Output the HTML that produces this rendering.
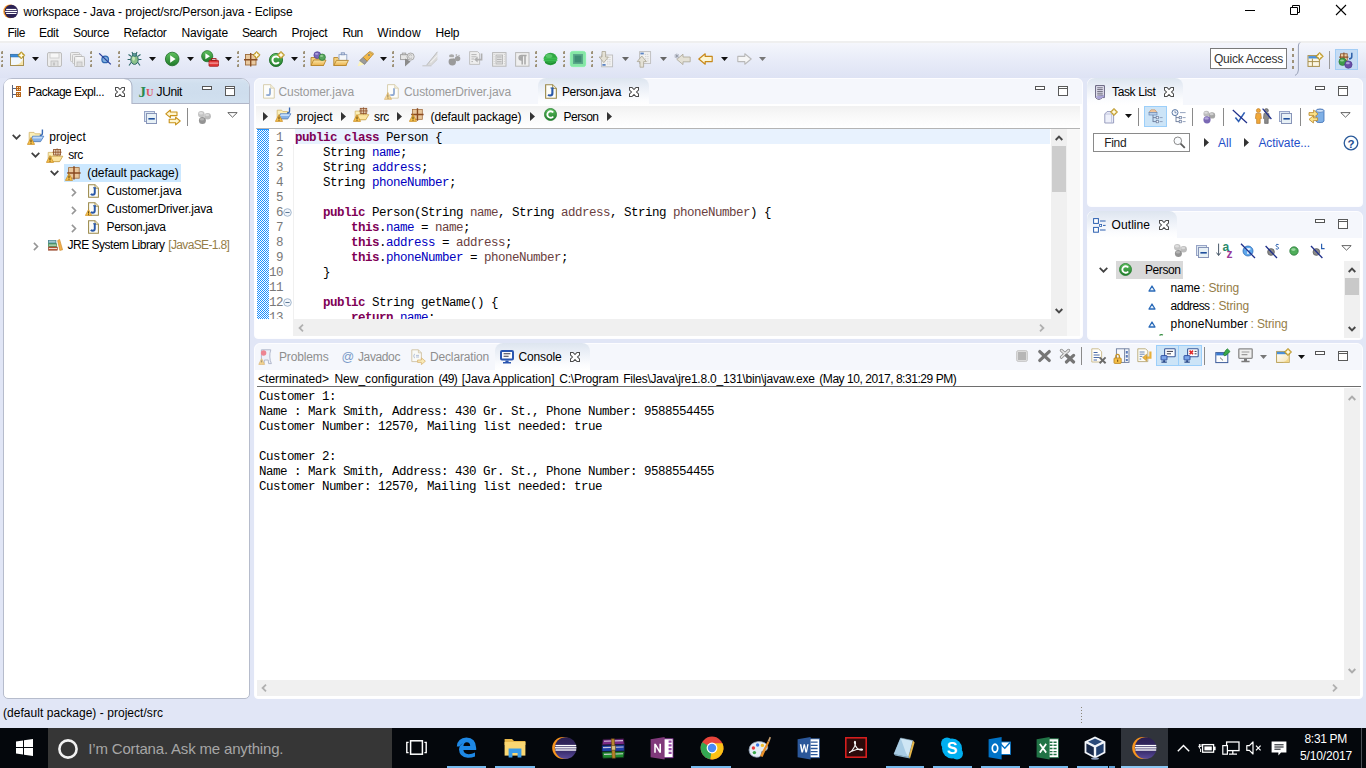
<!DOCTYPE html>
<html>
<head>
<meta charset="utf-8">
<title>workspace - Java - project/src/Person.java - Eclipse</title>
<style>
*{box-sizing:border-box;margin:0;padding:0}
html,body{width:1366px;height:768px;overflow:hidden;background:#e1e6f6;font-family:"Liberation Sans",sans-serif;font-size:12px;color:#000}
.a{position:absolute}
.t{position:absolute;white-space:pre;line-height:16px;height:16px}
svg{position:absolute;overflow:visible}
#titlebar{position:absolute;left:0;top:0;width:1366px;height:22px;background:#fff}
#menubar{position:absolute;left:0;top:22px;width:1366px;height:19px;background:#fff}
#toolbar{position:absolute;left:0;top:41px;width:1366px;height:37px;background:linear-gradient(#efefef 0px,#efefef 1.5px,#f5f6fc 2px,#eef1fa 10px,#e5e9f7 24px,#dee3f4 37px)}
.panel{position:absolute;background:#fff;overflow:hidden}
.panel.act{border:1px solid #b6bccc;border-radius:9px 9px 5px 5px}
.panel.ina{border:1px solid #fdfdff;border-radius:6px 6px 4px 4px}
.tabbar{position:absolute;left:0;top:0;right:0;height:25px}
.act .tabbar{background:linear-gradient(#d6e3f1 0,#d0dfee 20%,#cedded 60%,#d1e0ef 100%);border-bottom:1px solid #b6bccc}
.ina .tabbar{background:#f5f7fc}
#taskbar{position:absolute;left:0;top:728px;width:1366px;height:40px;background:#04070c}
</style>
</head>
<body>
<div id="titlebar">
<svg style="left:3px;top:3px" width="16" height="16" viewBox="0 0 16 16"><circle cx="7.1" cy="8.4" r="6.8" fill="#f7941e"/><circle cx="8.3" cy="8.4" r="6.7" fill="#2c2255"/><rect x="3.2" y="5.9" width="10.2" height="1.15" fill="#fff"/><rect x="2.2" y="7.9" width="12" height="1.15" fill="#fff"/><rect x="3.2" y="9.95" width="10.2" height="1.05" fill="#fff"/></svg>
<span class="t" style="left:23.5px;top:3.84px;font-size:12px;letter-spacing:-0.124px;">workspace - Java - project/src/Person.java - Eclipse</span>
<svg style="left:1245px;top:10px" width="10" height="1"><rect width="10" height="1" fill="#000"/></svg>
<svg style="left:1290px;top:5px" width="10" height="10" viewBox="0 0 10 10"><path d="M0.5 2.5h7v7h-7z M2.5 2.5v-2h7v7h-2" fill="none" stroke="#000" stroke-width="1"/></svg>
<svg style="left:1336px;top:5px" width="10" height="10" viewBox="0 0 10 10"><path d="M0 0L10 10M10 0L0 10" fill="none" stroke="#000" stroke-width="1.1"/></svg>
</div>
<div id="menubar"></div>
<span class="t" style="left:7.5px;top:24.84px;font-size:12px;letter-spacing:-0.461px;">File</span>
<span class="t" style="left:39px;top:24.84px;font-size:12px;letter-spacing:-0.297px;">Edit</span>
<span class="t" style="left:73px;top:24.84px;font-size:12px;letter-spacing:-0.339px;">Source</span>
<span class="t" style="left:123.5px;top:24.84px;font-size:12px;letter-spacing:-0.295px;">Refactor</span>
<span class="t" style="left:181.5px;top:24.84px;font-size:12px;letter-spacing:-0.109px;">Navigate</span>
<span class="t" style="left:242px;top:24.84px;font-size:12px;letter-spacing:-0.589px;">Search</span>
<span class="t" style="left:291.5px;top:24.84px;font-size:12px;letter-spacing:-0.194px;">Project</span>
<span class="t" style="left:342.5px;top:24.84px;font-size:12px;letter-spacing:-0.672px;">Run</span>
<span class="t" style="left:377.3px;top:24.84px;font-size:12px;letter-spacing:0.119px;">Window</span>
<span class="t" style="left:435.6px;top:24.84px;font-size:12px;letter-spacing:-0.247px;">Help</span>
<div id="toolbar"></div>
<svg width="0" height="0" style="left:0;top:0">
<defs>
<linearGradient id="gGreen" x1="0" y1="0" x2="0" y2="1"><stop offset="0" stop-color="#5fc15f"/><stop offset="1" stop-color="#1f7a2a"/></linearGradient>
<linearGradient id="gFold" x1="0" y1="0" x2="0" y2="1"><stop offset="0" stop-color="#fbe7a8"/><stop offset="1" stop-color="#eab14c"/></linearGradient>
<linearGradient id="gWin" x1="0" y1="0" x2="1" y2="1"><stop offset="0" stop-color="#ffffff"/><stop offset="1" stop-color="#f3e3b4"/></linearGradient>
<linearGradient id="gGray" x1="0" y1="0" x2="0" y2="1"><stop offset="0" stop-color="#f4f4f4"/><stop offset="1" stop-color="#d2d2d2"/></linearGradient>
<symbol id="hdl" viewBox="0 0 3 18"><rect x="0" y="0" width="2" height="3" fill="#9d927a"/><rect x="0" y="5" width="2" height="2" fill="#9d927a"/><rect x="0" y="9" width="2" height="2" fill="#9d927a"/><rect x="0" y="13" width="2" height="3" fill="#9d927a"/><rect x="0" y="0" width="1" height="1" fill="#c9c2b0"/><rect x="0" y="5" width="1" height="1" fill="#c9c2b0"/><rect x="0" y="9" width="1" height="1" fill="#c9c2b0"/><rect x="0" y="13" width="1" height="1" fill="#c9c2b0"/></symbol>
<symbol id="dd" viewBox="0 0 7 4"><path d="M0 0h7l-3.5 4z"/></symbol>
<symbol id="star" viewBox="0 0 8 8"><path d="M4 0.3L7.7 4L4 7.7L0.3 4z" fill="#c9a22c" stroke="#a88620" stroke-width="0.5" stroke-linejoin="round"/><path d="M4 1.3L4.9 3.1L6.7 4L4.9 4.9L4 6.7L3.1 4.9L1.3 4L3.1 3.1z" fill="#fffbe4"/></symbol>
</defs>
</svg>
<!-- handles -->
<svg style="left:1px;top:51px" width="3" height="18"><use href="#hdl"/></svg>
<svg style="left:90px;top:51px" width="3" height="18"><use href="#hdl"/></svg>
<svg style="left:118px;top:51px" width="3" height="18"><use href="#hdl"/></svg>
<svg style="left:237px;top:51px" width="3" height="18"><use href="#hdl"/></svg>
<svg style="left:303px;top:51px" width="3" height="18"><use href="#hdl"/></svg>
<svg style="left:392px;top:51px" width="3" height="18"><use href="#hdl"/></svg>
<svg style="left:535px;top:51px" width="3" height="18"><use href="#hdl"/></svg>
<svg style="left:563px;top:51px" width="3" height="18"><use href="#hdl"/></svg>
<svg style="left:591px;top:51px" width="3" height="18"><use href="#hdl"/></svg>
<!-- dropdown arrows -->
<svg style="left:32px;top:57px" width="7" height="4" fill="#111"><use href="#dd"/></svg>
<svg style="left:149px;top:57px" width="7" height="4" fill="#111"><use href="#dd"/></svg>
<svg style="left:187px;top:57px" width="7" height="4" fill="#111"><use href="#dd"/></svg>
<svg style="left:225px;top:57px" width="7" height="4" fill="#111"><use href="#dd"/></svg>
<svg style="left:291px;top:57px" width="7" height="4" fill="#111"><use href="#dd"/></svg>
<svg style="left:380px;top:57px" width="7" height="4" fill="#111"><use href="#dd"/></svg>
<svg style="left:622px;top:57px" width="7" height="4" fill="#666"><use href="#dd"/></svg>
<svg style="left:660px;top:57px" width="7" height="4" fill="#666"><use href="#dd"/></svg>
<svg style="left:721px;top:57px" width="7" height="4" fill="#111"><use href="#dd"/></svg>
<svg style="left:759px;top:57px" width="7" height="4" fill="#777"><use href="#dd"/></svg>
<!-- New -->
<svg style="left:10px;top:51px" width="16" height="16" viewBox="0 0 16 16"><rect x="0.5" y="3.5" width="13" height="11" fill="#f2f8fe" stroke="#a89050"/><rect x="0.5" y="3.2" width="13" height="2.8" fill="#3a8ad8" stroke="#2a6ab0" stroke-width="0.5"/><path d="M12.6 8Q11.6 13 5 14L13 14z" fill="#f6e4a8"/><use href="#star" x="7.3" y="0.3" width="8" height="8"/></svg>
<!-- Save (disabled) -->
<svg style="left:47px;top:52px" width="15" height="15" viewBox="0 0 15 15"><rect x="0.5" y="0.5" width="14" height="14" rx="1.5" fill="#ededed" stroke="#bdbdbd"/><rect x="3" y="1" width="9" height="5" fill="#f7f7f7" stroke="#c8c8c8" stroke-width="0.8"/><rect x="4" y="9" width="7" height="5.5" fill="#e0e0e0" stroke="#bdbdbd" stroke-width="0.8"/><rect x="6" y="10.5" width="2" height="3" fill="#c4c4c4"/></svg>
<!-- Save all (disabled) -->
<svg style="left:70px;top:52px" width="15" height="15" viewBox="0 0 15 15"><rect x="0.5" y="0.5" width="9" height="9" rx="1" fill="#ededed" stroke="#c4c4c4"/><rect x="2.5" y="2.5" width="9" height="9" rx="1" fill="#ededed" stroke="#c4c4c4"/><rect x="4.5" y="4.5" width="10" height="10" rx="1" fill="#ececec" stroke="#bdbdbd"/><rect x="7" y="10" width="5" height="4.5" fill="#dcdcdc" stroke="#bdbdbd" stroke-width="0.8"/><rect x="6.5" y="5" width="6" height="2.5" fill="#f7f7f7"/></svg>
<!-- Skip breakpoints -->
<svg style="left:98px;top:52px" width="14" height="14" viewBox="0 0 14 14"><circle cx="7.2" cy="7.4" r="3.3" fill="#7fb0e0" stroke="#2d66b0" stroke-width="1.2"/><path d="M1.2 1.4L12.8 12.4" stroke="#2a3f9a" stroke-width="1.3"/></svg>
<!-- Debug bug -->
<svg style="left:127px;top:51px" width="15" height="16" viewBox="0 0 15 16"><g stroke="#2f6a6a" stroke-width="1.1" fill="none"><path d="M4.5 5.5L1.5 3.5M10.5 5.5L13.5 3.5M3.8 8.5L0.6 8.5M11.2 8.5L14.4 8.5M4.5 11L2 14.5M10.5 11L13 14.5M6 3.5L5 1M9 3.5L10 1"/></g><ellipse cx="7.5" cy="8.6" rx="3.7" ry="4.8" fill="#8cc28a" stroke="#2f6a6a" stroke-width="1"/><ellipse cx="7.5" cy="3.9" rx="2.1" ry="1.5" fill="#5b9a98" stroke="#2f6a6a" stroke-width="0.8"/><ellipse cx="6.6" cy="7.6" rx="1.4" ry="2.2" fill="#c9e7b9"/></svg>
<!-- Run -->
<svg style="left:164px;top:51px" width="16" height="16" viewBox="0 0 16 16"><circle cx="8.2" cy="8" r="6.8" fill="url(#gGreen)" stroke="#1c6b25" stroke-width="0.8"/><path d="M6.2 4.2L11.6 8L6.2 11.8z" fill="#fff"/></svg>
<!-- Run last tool -->
<svg style="left:201px;top:50px" width="18" height="17" viewBox="0 0 18 17"><circle cx="6.2" cy="6.2" r="5.6" fill="url(#gGreen)" stroke="#1c6b25" stroke-width="0.7"/><path d="M4.4 3.2L9 6.2L4.4 9.2z" fill="#fff"/><rect x="8" y="10.3" width="9.5" height="6" rx="0.8" fill="#e33a3a" stroke="#a11717" stroke-width="0.8"/><rect x="10.6" y="8.6" width="4.4" height="2" fill="none" stroke="#a11717" stroke-width="0.9"/><rect x="8.2" y="12.6" width="9.2" height="1" fill="#f7b5b5"/></svg>
<!-- New package -->
<svg style="left:244px;top:51px" width="17" height="16" viewBox="0 0 17 16"><rect x="1.5" y="3.5" width="10.5" height="10.5" fill="#e8c9a0" stroke="#9b6a3b" stroke-width="0.9"/><path d="M6.7 2V15.5M0 8.7H13.5" stroke="#8a4f24" stroke-width="1.4"/><use href="#star" x="8.6" y="0" width="8" height="8"/></svg>
<!-- New class -->
<svg style="left:269px;top:51px" width="16" height="16" viewBox="0 0 16 16"><circle cx="7" cy="9" r="6.6" fill="url(#gGreen)" stroke="#1c6b25" stroke-width="0.8"/><path d="M9.9 6.8A3.6 3.6 0 1 0 9.9 11.2" fill="none" stroke="#fff" stroke-width="2"/><use href="#star" x="8" y="0" width="8" height="8"/></svg>
<!-- Open type -->
<svg style="left:310px;top:51px" width="17" height="16" viewBox="0 0 17 16"><path d="M1 6.5h4l1 1.3h7.5v6.7H1z" fill="#f3cf7c" stroke="#b8872e" stroke-width="0.9"/><path d="M1 14.5L3.6 9h12.4L13.5 14.5z" fill="url(#gFold)" stroke="#b8872e" stroke-width="0.9"/><circle cx="7.3" cy="4.1" r="3.4" fill="#7766b8" stroke="#4d3f95" stroke-width="0.7"/><circle cx="12.2" cy="6.2" r="3.2" fill="#56a55c" stroke="#2d7a38" stroke-width="0.7"/><ellipse cx="6.6" cy="2.8" rx="1.7" ry="0.9" fill="#b3a8e0"/><ellipse cx="11.6" cy="5" rx="1.6" ry="0.8" fill="#a7d9a5"/></svg>
<!-- Open task -->
<svg style="left:333px;top:51px" width="16" height="16" viewBox="0 0 16 16"><path d="M0.8 6.5h4l1 1.3h7.5v6.7H0.8z" fill="#f3cf7c" stroke="#b8872e" stroke-width="0.9"/><rect x="6" y="3.6" width="7.8" height="5.8" fill="#f4f7fb" stroke="#8fa3c4" stroke-width="0.9"/><rect x="8.2" y="1.8" width="3.3" height="2" fill="#cdd8ea" stroke="#7d92b8" stroke-width="0.8"/><path d="M0.8 14.5L3.4 9.4h12L12.8 14.5z" fill="url(#gFold)" stroke="#b8872e" stroke-width="0.9"/></svg>
<!-- Search flashlight -->
<svg style="left:357px;top:51px" width="17" height="16" viewBox="0 0 17 16"><path d="M0.6 15.2L3 9.8L7.5 13.2z" fill="#fff6b8"/><path d="M2.6 9.6L6.2 6.2L10.2 10.2L7.6 13.4z" fill="#9a9a9a" stroke="#6e6e6e" stroke-width="0.6"/><path d="M6.2 6.2L12.2 0.9L16.2 3.2L10.2 10.2z" fill="#f0b84a" stroke="#b8872e" stroke-width="0.8"/><path d="M12.2 0.9L13.6 0.6L16.4 2.2L16.2 3.2z" fill="#fbe6a0" stroke="#b8872e" stroke-width="0.6"/><rect x="11.3" y="3.4" width="1.3" height="1.3" fill="#2d5fb0"/></svg>
<!-- gray: open task-ish -->
<svg style="left:400px;top:52px" width="15" height="15" viewBox="0 0 15 15"><rect x="0.6" y="2.6" width="7" height="5" fill="#e6e6e6" stroke="#9c9c9c" stroke-width="0.9"/><rect x="2.2" y="1" width="3.6" height="1.8" fill="#d0d0d0" stroke="#9c9c9c" stroke-width="0.7"/><path d="M5 6.5L5 14.6L10.6 9.5z" fill="#8b8b8b"/><circle cx="10.6" cy="4.6" r="3.6" fill="#e2e2e2" stroke="#a6a6a6" stroke-width="0.9"/><path d="M12 3.6A1.9 1.9 0 1 0 12 5.8" fill="none" stroke="#b3b3b3" stroke-width="0.9"/></svg>
<!-- gray: pen -->
<svg style="left:422px;top:51px" width="16" height="16" viewBox="0 0 16 16"><path d="M15.4 0.8L15.4 8.4L9.4 14.2L4.6 14.2z" fill="#dadada"/><path d="M15.4 0.8L4.6 14.2" stroke="#bdbdbd" stroke-width="1"/><path d="M0.4 14.8H9.4" stroke="#c4c4c4" stroke-width="1"/><path d="M15.4 4.4L8.4 11.6" stroke="#f0f0f0" stroke-width="1.2"/><path d="M15.4 8.4L9.4 14.2" stroke="#c8c8c8" stroke-width="0.8"/></svg>
<!-- gray: balls -->
<svg style="left:448px;top:53px" width="13" height="13" viewBox="0 0 13 13"><circle cx="4.3" cy="8.8" r="3.7" fill="#9a9a9a"/><circle cx="9.6" cy="5.6" r="2.7" fill="#9f9f9f"/><ellipse cx="3.6" cy="3" rx="2.6" ry="1.8" fill="#a9a9a9"/><ellipse cx="3.4" cy="4.9" rx="2.4" ry="0.7" fill="#f2f2f2"/><circle cx="8.4" cy="2" r="0.9" fill="#b5b5b5"/><circle cx="11" cy="2.6" r="0.8" fill="#b5b5b5"/></svg>
<!-- gray: word wrap -->
<svg style="left:469px;top:51px" width="15" height="15" viewBox="0 0 15 15"><path d="M0.6 0.6H8.6L10.6 2.6V13.4H0.6z" fill="#efefef" stroke="#bcbcbc" stroke-width="0.9"/><path d="M2.4 3.6H7.6M2.4 5.8H7.6M2.4 8H5.2M2.4 10.6H4" stroke="#b5b5b5" stroke-width="1"/><path d="M12.6 2.4V8.6H7.2" fill="none" stroke="#b0b0b0" stroke-width="1.6"/><path d="M8.6 5.6L5.2 8.6L8.6 11.6z" fill="#b0b0b0"/></svg>
<!-- gray: block selection -->
<svg style="left:492px;top:52px" width="15" height="15" viewBox="0 0 15 15"><rect x="0.6" y="0.6" width="13.4" height="13.6" fill="#efefef" stroke="#b8b8b8" stroke-width="1"/><rect x="4" y="3" width="6.6" height="9" fill="#e3e3e3" stroke="#b0b0b0" stroke-width="0.8"/><path d="M5 5H9.6M5 7.4H9.6M5 9.8H9.6" stroke="#a9a9a9" stroke-width="0.9"/><path d="M2.2 2V13M12.4 2V13" stroke="#c9c9c9" stroke-width="0.9" stroke-dasharray="1 1.3"/></svg>
<!-- gray: pilcrow -->
<svg style="left:515px;top:52px" width="15" height="15" viewBox="0 0 15 15"><rect x="0.6" y="0.6" width="13.4" height="13.6" fill="#efefef" stroke="#b8b8b8" stroke-width="1"/><path d="M7.2 3.2V12.4M10 3.2V12.4M11.6 3.4H6.4A2.3 2.3 0 0 0 6.4 8H7.2" fill="none" stroke="#a8a8a8" stroke-width="1.5"/><path d="M4.6 4.2h2.6v3.2h-2z" fill="#a8a8a8"/></svg>
<!-- green ball -->
<svg style="left:543px;top:52px" width="15" height="14" viewBox="0 0 15 14"><ellipse cx="7.5" cy="7" rx="6.6" ry="6.2" fill="#2fa843"/><ellipse cx="6" cy="4" rx="3.4" ry="2" fill="#58c66a"/><path d="M0.4 6.2H14.6M0.4 8.2H14.6" stroke="#45c85a" stroke-width="0.9"/><path d="M2 10.5Q7.5 13.5 13 10.5" stroke="#1e8a30" stroke-width="1" fill="none"/></svg>
<!-- green square -->
<svg style="left:570px;top:51px" width="16" height="16" viewBox="0 0 16 16"><rect x="0.4" y="0.4" width="15.2" height="15.2" rx="2.2" fill="#86e6a6" stroke="#7ef0a2" stroke-width="0.8"/><rect x="3" y="3" width="10" height="10" fill="#5aa88a"/><rect x="4.6" y="4.6" width="6.8" height="6.8" fill="#3f8c74"/></svg>
<!-- next annotation -->
<svg style="left:598px;top:51px" width="16" height="17" viewBox="0 0 16 17"><rect x="3.6" y="4" width="11" height="11.8" fill="#f1f1f1" stroke="#bdbdbd" stroke-width="0.9"/><path d="M9 6.4H13M9 8.6H13M9 10.8H13M9 13H13" stroke="#c9c9c9" stroke-width="0.8" stroke-dasharray="1.4 0.8"/><rect x="4.4" y="13" width="3.2" height="1.8" fill="#5b84c4"/><path d="M4 0.5H7.6V6H10.4L5.8 11.6L1.2 6H4z" fill="#e4e1d6" stroke="#aaa594" stroke-width="0.8"/></svg>
<!-- prev annotation -->
<svg style="left:636px;top:51px" width="16" height="17" viewBox="0 0 16 17"><rect x="3.6" y="0.6" width="11" height="11.8" fill="#f1f1f1" stroke="#bdbdbd" stroke-width="0.9"/><path d="M8.6 3.4H13M9 5.6H13M9 7.8H13M9 10H13" stroke="#c9c9c9" stroke-width="0.8" stroke-dasharray="1.4 0.8"/><rect x="4.4" y="1.6" width="3.4" height="1.8" fill="#5b84c4"/><path d="M4 16.2H7.6V10.6H10.4L5.8 5L1.2 10.6H4z" fill="#e4e1d6" stroke="#aaa594" stroke-width="0.8"/></svg>
<!-- last edit location -->
<svg style="left:674px;top:53px" width="17" height="13" viewBox="0 0 17 13"><path d="M16.2 4H9V1.2L2.8 6.4L9 11.6V8.8H16.2z" fill="#e4e1d6" stroke="#aaa594" stroke-width="0.8"/><path d="M0.4 3H5.2M2.8 0.6V5.4M1 1.2L4.6 4.8M4.6 1.2L1 4.8" stroke="#8a8f9c" stroke-width="0.7"/></svg>
<!-- back -->
<svg style="left:698px;top:53px" width="15" height="12" viewBox="0 0 15 12"><path d="M14.2 3.4H7.2V0.8L0.8 6L7.2 11.2V8.6H14.2z" fill="#fdf6d2" stroke="#c8891a" stroke-width="1.2" stroke-linejoin="round"/></svg>
<!-- forward (disabled) -->
<svg style="left:737px;top:53px" width="15" height="12" viewBox="0 0 15 12"><path d="M0.8 3.4H7.8V0.8L14.2 6L7.8 11.2V8.6H0.8z" fill="#f6f6f6" stroke="#b9b9b9" stroke-width="1.1" stroke-linejoin="round"/></svg>
<!-- Quick access -->
<div class="a" style="left:1210px;top:48px;width:77px;height:21px;background:#fff;border:1px solid #7a7a7a"></div>
<span class="t" style="left:1214px;top:50.84px;font-size:12px;letter-spacing:-0.253px;color:#333;">Quick Access</span>
<svg style="left:1292px;top:48px" width="2" height="22" viewBox="0 0 2 22"><rect x="0" y="0" width="2" height="3" fill="#9d927a"/><rect x="0" y="6" width="2" height="3" fill="#9d927a"/><rect x="0" y="12" width="2" height="3" fill="#9d927a"/><rect x="0" y="18" width="2" height="3" fill="#9d927a"/></svg>
<svg style="left:1293px;top:42px" width="8" height="34" viewBox="0 0 8 34"><path d="M7 0.5Q5.4 1.5 5.4 4V28Q5.4 32 2 33.5" fill="none" stroke="#9aa2b8" stroke-width="1"/></svg>
<!-- open perspective -->
<svg style="left:1307px;top:52px" width="17" height="16" viewBox="0 0 17 16"><rect x="1" y="3.6" width="11.4" height="10.8" fill="#fbf6e4" stroke="#a8904e" stroke-width="1"/><rect x="1.5" y="4.1" width="10.4" height="2.4" fill="#4a90d9"/><path d="M1 9.6H12.4M5.4 6.6V14.4" stroke="#a8904e" stroke-width="1"/><use href="#star" x="8.4" y="0" width="8.4" height="8.4"/></svg>
<div class="a" style="left:1329px;top:51px;width:1px;height:18px;background:#9a9a9a"></div>
<div class="a" style="left:1335px;top:49px;width:23px;height:21px;background:#c5dcf4;border:1px solid #a3cdf5"></div>
<svg style="left:1338px;top:52px" width="17" height="17" viewBox="0 0 17 17"><rect x="2.6" y="1.8" width="6.6" height="6.6" fill="#eccfa6" stroke="#8a4f24" stroke-width="0.8"/><path d="M5.9 0.6V9.4M1.2 5.1H10.4" stroke="#8a4f24" stroke-width="1.1"/><path d="M13.8 0.8V4.4Q13.8 6.8 11 6.8" fill="none" stroke="#2d5fa8" stroke-width="1.5"/><circle cx="4.6" cy="9.8" r="3.7" fill="#3f9a4a" stroke="#27752f" stroke-width="0.6"/><ellipse cx="4" cy="8.5" rx="2" ry="1.1" fill="#8fd093"/><circle cx="10.4" cy="12.6" r="3.7" fill="#6a4fa6" stroke="#4a3388" stroke-width="0.6"/><ellipse cx="9.8" cy="11.2" rx="2" ry="1.1" fill="#b1a0d8"/></svg>
<svg width="0" height="0" style="left:0;top:0"><defs>
<symbol id="warn" viewBox="0 0 8 8"><path d="M4 0.5L7.6 7.4H0.4z" fill="#f6c04a" stroke="#c98a1c" stroke-width="0.7" stroke-linejoin="round"/><rect x="3.55" y="2.6" width="0.9" height="2.6" fill="#3a2a08"/><rect x="3.55" y="5.8" width="0.9" height="0.9" fill="#3a2a08"/></symbol>
<symbol id="jfile" viewBox="0 0 13 16"><path d="M0.7 0.7H8.2L12.3 4.8V15.3H0.7z" fill="#fdfdf8" stroke="#9a8848" stroke-width="1.2"/><path d="M8.2 0.7V4.8H12.3" fill="#efe6c8" stroke="#9a8848" stroke-width="0.9"/><path d="M8 4.2V10Q8 12.4 5.6 12.4Q4.2 12.4 3.4 11.4" fill="none" stroke="#2a58a8" stroke-width="2.3"/><path d="M6 4.2H9.4" stroke="#2a58a8" stroke-width="1.2"/></symbol>
<symbol id="jfileg" viewBox="0 0 13 16"><path d="M0.6 0.6H8.4L12.2 4.4V15.2H0.6z" fill="#fdfdfa" stroke="#d6cba8" stroke-width="1"/><path d="M8.4 0.6V4.4H12.2" fill="#f4efdd" stroke="#d6cba8" stroke-width="0.8"/><path d="M7.6 4.4V9.8Q7.6 12 5.4 12Q4.2 12 3.6 11.2" fill="none" stroke="#8fa9d2" stroke-width="1.9"/></symbol>
<symbol id="pkgi" viewBox="0 0 15 14"><rect x="2.6" y="1.6" width="10.6" height="10.6" fill="#e9c79c" stroke="#a06a3a" stroke-width="0.8"/><path d="M8 0.2V13.6M1.2 7H14.6" stroke="#8a4a20" stroke-width="1.5"/></symbol>
<symbol id="proj" viewBox="0 0 17 16"><path d="M1.2 3.4H6L7.2 4.8H12.4V12.6H1.2z" fill="#fbefb8" stroke="#d2b468" stroke-width="0.8"/><path d="M2 12.6L4.6 7.2H15.8L12.6 12.6z" fill="#86b2e8" stroke="#4a7cc4" stroke-width="0.8"/><path d="M5.2 7.8H14.8L13.8 9.6H4.4z" fill="#c4dcf8"/><path d="M14.4 0.6V4.2Q14.4 6.4 11.8 6.4" fill="none" stroke="#3a6ab4" stroke-width="1.4"/></symbol>
<symbol id="srcf" viewBox="0 0 17 15"><path d="M1.2 4.4H6L7.2 5.8H12.4V13.6H1.2z" fill="#fbefb8" stroke="#d2b468" stroke-width="0.8"/><path d="M2 13.6L4.6 8.2H15.8L12.6 13.6z" fill="#fbe4a0" stroke="#c8a048" stroke-width="0.8"/><rect x="6.6" y="1.4" width="7" height="5.6" fill="#fbf0dc" stroke="#8a4a20" stroke-width="0.8"/><path d="M10.1 0.4V7.8M5.6 4.2H14.6M8.3 1.4V7M11.9 1.4V7" stroke="#8a4a20" stroke-width="0.8"/></symbol>
<symbol id="chv" viewBox="0 0 9 6"><path d="M0.7 0.9L4.5 4.7L8.3 0.9" fill="none" stroke="#404040" stroke-width="1.7"/></symbol>
<symbol id="chr" viewBox="0 0 6 9"><path d="M0.9 0.9L4.5 4.5L0.9 8.1" fill="none" stroke="#969696" stroke-width="1.6"/></symbol>
<symbol id="xclose" viewBox="0 0 10 10"><path d="M0.5 0.5H3L5 2.5L7 0.5H9.5V3L7.5 5L9.5 7V9.5H7L5 7.5L3 9.5H0.5V7L2.5 5L0.5 3z" fill="#fff" stroke="#4c4c4c" stroke-width="1.05" stroke-linejoin="miter"/></symbol>
<symbol id="minb" viewBox="0 0 10 4"><rect x="0.5" y="0.5" width="9" height="3" fill="#fff" stroke="#555" stroke-width="1"/></symbol>
<symbol id="maxb" viewBox="0 0 10 10"><rect x="0.5" y="0.5" width="9" height="9" fill="#fff" stroke="#5a5a5a" stroke-width="1"/><path d="M0.5 2.5H9.5" stroke="#5a5a5a" stroke-width="1"/></symbol>
<symbol id="vmenu" viewBox="0 0 11 6"><path d="M0.8 0.6H10.2L5.5 5.2z" fill="#fff" stroke="#555" stroke-width="0.9" stroke-linejoin="round"/></symbol>
<symbol id="gballs" viewBox="0 0 14 14"><circle cx="4.3" cy="4.3" r="3.3" fill="#c4c4c4"/><circle cx="10.6" cy="6.2" r="3.3" fill="#bcbcbc"/><circle cx="5.4" cy="10.4" r="3.5" fill="#939393"/><ellipse cx="4" cy="3.2" rx="2" ry="1.2" fill="#dedede"/><ellipse cx="10.2" cy="5" rx="2" ry="1.2" fill="#d8d8d8"/><ellipse cx="5" cy="9.2" rx="2.2" ry="1.2" fill="#b4b4b4"/></symbol>
<symbol id="collapse" viewBox="0 0 14 14"><rect x="0.5" y="1.5" width="10" height="10" fill="#dde8f2" stroke="#97a4c6" stroke-width="1"/><rect x="2.5" y="3.5" width="10" height="10" fill="#e8f1f6" stroke="#8794b8" stroke-width="1"/><rect x="4.4" y="8" width="6.4" height="1.6" fill="#1f4f9c"/></symbol>
</defs></svg>
<div id="pkg" class="panel act" style="left:3px;top:78px;width:247px;height:621px">
<div class="tabbar"></div>
</div>
<svg style="left:3px;top:78px" width="247" height="28" viewBox="0 0 247 28"><path d="M1 27V9Q1 1 9 1H121Q128 1.2 128.5 8V27z" fill="#fff"/><path d="M121 0.5Q128.6 0.8 129 8V25.5H246" fill="none" stroke="#b0b6c8" stroke-width="1"/></svg>
<!-- Package explorer tab icon -->
<svg style="left:11px;top:85px" width="11" height="13" viewBox="0 0 11 13" shape-rendering="crispEdges"><rect x="1" y="0" width="1" height="13" fill="#5a6680"/><rect x="2" y="3" width="3" height="1" fill="#5a6680"/><rect x="2" y="9" width="3" height="1" fill="#5a6680"/><rect x="5" y="1" width="5" height="5" fill="#b8651a"/><rect x="5" y="7" width="5" height="5" fill="#b8651a"/><rect x="6" y="2" width="1" height="1" fill="#f7dcae"/><rect x="8" y="2" width="1" height="1" fill="#f7dcae"/><rect x="6" y="4" width="1" height="1" fill="#f7dcae"/><rect x="8" y="4" width="1" height="1" fill="#f7dcae"/><rect x="6" y="8" width="1" height="1" fill="#f7dcae"/><rect x="8" y="8" width="1" height="1" fill="#f7dcae"/><rect x="6" y="10" width="1" height="1" fill="#f7dcae"/><rect x="8" y="10" width="1" height="1" fill="#f7dcae"/></svg>
<span class="t" style="left:28px;top:83.84px;font-size:12px;letter-spacing:-0.493px;">Package Expl...</span>
<svg style="left:115px;top:87px" width="10" height="10"><use href="#xclose"/></svg>
<span class="t" style="left:138.6px;top:83.94px;font-size:15px;color:#2a8a50;font-family:'Liberation Serif',serif;font-weight:bold;">J</span><span class="t" style="left:146px;top:85.46px;font-size:10.5px;color:#e05060;font-family:'Liberation Serif',serif;font-weight:bold;">U</span>
<span class="t" style="left:156.5px;top:83.84px;font-size:12px;letter-spacing:-0.369px;">JUnit</span>
<svg style="left:202px;top:86px" width="10" height="4"><use href="#minb"/></svg>
<svg style="left:225px;top:86px" width="10" height="10"><use href="#maxb"/></svg>
<!-- view toolbar -->
<svg style="left:144px;top:110px" width="14" height="14"><use href="#collapse"/></svg>
<svg style="left:165px;top:109px" width="16" height="17" viewBox="0 0 16 17"><path d="M12 3H5.4V1L0.8 4.8L5.4 8.6V6.6H12z" fill="#fff6d0" stroke="#c8921a" stroke-width="1.1" stroke-linejoin="round"/><path d="M4.2 10.2H10.6V8.2L15.2 12L10.6 15.8V13.8H4.2z" fill="#fff6d0" stroke="#c8921a" stroke-width="1.1" stroke-linejoin="round"/></svg>
<div class="a" style="left:187px;top:108px;width:1px;height:18px;background:#8a8a8a"></div>
<svg style="left:197px;top:110px" width="14" height="14"><use href="#gballs"/></svg>
<svg style="left:227px;top:112px" width="11" height="6"><use href="#vmenu"/></svg>
<!-- tree -->
<svg style="left:12px;top:134px" width="9" height="6"><use href="#chv"/></svg>
<svg style="left:28px;top:129px" width="17" height="16"><use href="#proj"/></svg><svg style="left:27px;top:137px" width="8" height="8"><use href="#warn"/></svg>
<span class="t" style="left:49.3px;top:128.84px;font-size:12px;letter-spacing:0.067px;">project</span>
<svg style="left:31px;top:152px" width="9" height="6"><use href="#chv"/></svg>
<svg style="left:47px;top:148px" width="17" height="15"><use href="#srcf"/></svg><svg style="left:46px;top:155px" width="8" height="8"><use href="#warn"/></svg>
<span class="t" style="left:68.3px;top:146.84px;font-size:12px;letter-spacing:-0.500px;">src</span>
<div class="a" style="left:64px;top:164px;width:117px;height:18px;background:#cce8ff"></div>
<svg style="left:50px;top:170px" width="9" height="6"><use href="#chv"/></svg>
<svg style="left:66px;top:166px" width="15" height="14"><use href="#pkgi"/></svg><svg style="left:65px;top:173px" width="8" height="8"><use href="#warn"/></svg>
<span class="t" style="left:87.3px;top:164.84px;font-size:12px;letter-spacing:-0.084px;">(default package)</span>
<svg style="left:71px;top:188px" width="6" height="9"><use href="#chr"/></svg>
<svg style="left:88px;top:184px" width="11" height="14"><use href="#jfile"/></svg>
<span class="t" style="left:106.6px;top:182.84px;font-size:12px;letter-spacing:-0.131px;">Customer.java</span>
<svg style="left:71px;top:206px" width="6" height="9"><use href="#chr"/></svg>
<svg style="left:88px;top:202px" width="11" height="14"><use href="#jfile"/></svg><svg style="left:85px;top:209px" width="7" height="7"><use href="#warn"/></svg>
<span class="t" style="left:106.6px;top:200.84px;font-size:12px;letter-spacing:-0.142px;">CustomerDriver.java</span>
<svg style="left:71px;top:224px" width="6" height="9"><use href="#chr"/></svg>
<svg style="left:88px;top:220px" width="11" height="14"><use href="#jfile"/></svg>
<span class="t" style="left:106.6px;top:218.84px;font-size:12px;letter-spacing:-0.398px;">Person.java</span>
<svg style="left:33px;top:241.5px" width="6" height="9"><use href="#chr"/></svg>
<svg style="left:48px;top:239px" width="15" height="12" viewBox="0 0 15 12"><rect x="0.4" y="1.6" width="7.6" height="2.8" fill="#3a8a9a" stroke="#2a6a78" stroke-width="0.5"/><rect x="1" y="2.4" width="6.6" height="1" fill="#e4f0f0"/><rect x="0.4" y="4.8" width="8.4" height="2.8" fill="#4a9a5a" stroke="#2f7a3f" stroke-width="0.5"/><rect x="1" y="5.6" width="7.4" height="1" fill="#e4f0e4"/><rect x="0.4" y="8" width="9" height="3.2" fill="#b85a3a" stroke="#8a3a20" stroke-width="0.5"/><rect x="1" y="9" width="8" height="1" fill="#f0dcd0"/><path d="M9.6 1.6L11.6 0.4L14.6 10.8L11.8 11.4z" fill="#f4b04a" stroke="#c8862a" stroke-width="0.6"/></svg>
<span class="t" style="left:67.6px;top:236.84px;font-size:12px;letter-spacing:-0.502px;">JRE System Library</span>
<span class="t" style="left:168.2px;top:236.84px;font-size:12px;letter-spacing:-0.642px;color:#957d47;">&#91;JavaSE-1.8&#93;</span>
<svg width="0" height="0" style="left:0;top:0"><defs>
<symbol id="bca" viewBox="0 0 5 9"><path d="M0 0L5 4.5L0 9z" fill="#333"/></symbol>
<symbol id="clsC" viewBox="0 0 14 14"><circle cx="7" cy="7" r="6.5" fill="url(#gGreen)" stroke="#1f7a2a" stroke-width="0.8"/><path d="M9.9 4.9A3.5 3.5 0 1 0 9.9 9.1" fill="none" stroke="#fff" stroke-width="2"/></symbol>
<symbol id="sbup" viewBox="0 0 8 6"><path d="M0.7 5L4 1.6L7.3 5" fill="none" stroke="#484848" stroke-width="1.9"/></symbol>
<symbol id="sbdn" viewBox="0 0 8 6"><path d="M0.7 1L4 4.4L7.3 1" fill="none" stroke="#484848" stroke-width="1.9"/></symbol>
<symbol id="sblt" viewBox="0 0 6 8"><path d="M5 0.7L1.6 4L5 7.3" fill="none" stroke="#b0b0b0" stroke-width="1.8"/></symbol>
<symbol id="sbrt" viewBox="0 0 6 8"><path d="M1 0.7L4.4 4L1 7.3" fill="none" stroke="#b0b0b0" stroke-width="1.8"/></symbol>
<symbol id="fold" viewBox="0 0 9 9"><circle cx="4.5" cy="4.5" r="3.8" fill="#f2f6fb" stroke="#9ab0c8" stroke-width="0.9"/><path d="M2.4 4.5H6.6" stroke="#5a7896" stroke-width="1"/></symbol>
</defs></svg>
<div id="editor" class="panel ina" style="left:254px;top:78px;width:829px;height:261px">
<div class="tabbar" style="height:25px"></div>
<div class="a" style="left:1px;top:27px;width:824px;height:23px;background:linear-gradient(#f1f1f1 0,#f8f8f8 40%,#fff 100%);border-bottom:1px solid #b4b4b4"></div>
<!-- code area -->
<div class="a" style="left:2px;top:50px;width:12px;height:190px;background-color:#fff;background-image:conic-gradient(#1e90ff 25%,#fff 0 50%,#1e90ff 0 75%,#fff 0);background-size:2px 2px;border-top:1px solid #1e90ff"></div>
<div class="a" style="left:40px;top:50px;width:755px;height:15px;background:#e8f2fe"></div>
<div class="a" style="left:38px;top:65px;width:1px;height:175px;background:#f0f0f0"></div>
<!-- vscroll -->
<div class="a" style="left:796px;top:50px;width:16px;height:207px;background:#f0f0f0"></div>
<div class="a" style="left:797px;top:67px;width:14px;height:46px;background:#cdcdcd"></div>
<div class="a" style="left:812px;top:50px;width:13px;height:207px;background:#f8f8f8"></div>
<!-- hscroll -->
<div class="a" style="left:38px;top:240px;width:774px;height:17px;background:#f0f0f0"></div>
</div>
<div class="a" style="left:538px;top:78px;width:111px;height:27px;background:linear-gradient(#dde5ef 0,#e9eef6 30%,#fbfcfe 80%,#fff 100%);border-radius:8px 8px 0 0"></div>
<svg style="left:1055px;top:135px" width="8" height="6"><use href="#sbup"/></svg>
<svg style="left:1055px;top:308px" width="8" height="6"><use href="#sbdn"/></svg>
<svg style="left:298px;top:324px" width="6" height="8"><use href="#sblt"/></svg>
<svg style="left:1039px;top:324px" width="6" height="8"><use href="#sbrt"/></svg>
<!-- editor tabs -->
<svg style="left:263px;top:84px" width="12" height="15"><use href="#jfileg"/></svg>
<span class="t" style="left:278.5px;top:83.84px;font-size:12px;letter-spacing:-0.093px;color:#9a9a9a;">Customer.java</span>
<svg style="left:387px;top:84px" width="12" height="15"><use href="#jfileg"/></svg><svg style="left:384px;top:92px" width="8" height="8" opacity="0.55"><use href="#warn"/></svg>
<span class="t" style="left:404px;top:83.84px;font-size:12px;letter-spacing:-0.090px;color:#9a9a9a;">CustomerDriver.java</span>
<svg style="left:545px;top:84px" width="12" height="15"><use href="#jfile"/></svg>
<span class="t" style="left:562px;top:83.84px;font-size:12px;letter-spacing:-0.398px;">Person.java</span>
<svg style="left:629px;top:87px" width="10" height="10"><use href="#xclose"/></svg>
<svg style="left:1035px;top:86px" width="10" height="4"><use href="#minb"/></svg>
<svg style="left:1058px;top:86px" width="10" height="10"><use href="#maxb"/></svg>
<!-- breadcrumb -->
<svg style="left:263px;top:112px" width="5" height="9"><use href="#bca"/></svg>
<svg style="left:276px;top:107px" width="16" height="15"><use href="#proj"/></svg><svg style="left:275px;top:114px" width="8" height="8"><use href="#warn"/></svg>
<span class="t" style="left:296.5px;top:108.84px;font-size:12px;letter-spacing:-0.004px;">project</span>
<svg style="left:341px;top:112px" width="5" height="9"><use href="#bca"/></svg>
<svg style="left:354px;top:107px" width="16" height="14"><use href="#srcf"/></svg><svg style="left:353px;top:114px" width="8" height="8"><use href="#warn"/></svg>
<span class="t" style="left:374px;top:108.84px;font-size:12px;letter-spacing:-0.333px;">src</span>
<svg style="left:397px;top:112px" width="5" height="9"><use href="#bca"/></svg>
<svg style="left:410px;top:108px" width="14" height="13"><use href="#pkgi"/></svg><svg style="left:409px;top:114px" width="8" height="8"><use href="#warn"/></svg>
<span class="t" style="left:430.5px;top:108.84px;font-size:12px;letter-spacing:-0.102px;">(default package)</span>
<svg style="left:530px;top:112px" width="5" height="9"><use href="#bca"/></svg>
<svg style="left:544px;top:108px" width="13" height="13"><use href="#clsC"/></svg>
<span class="t" style="left:563.5px;top:108.84px;font-size:12px;letter-spacing:-0.505px;">Person</span>
<svg style="left:607px;top:112px" width="5" height="9"><use href="#bca"/></svg>
<!-- line numbers -->
<span class="t" style="left:276px;top:129.67px;font-size:12.5px;letter-spacing:-0.516px;color:#787878;font-family:'Liberation Mono',monospace;">1</span>
<span class="t" style="left:276px;top:144.67px;font-size:12.5px;letter-spacing:-0.516px;color:#787878;font-family:'Liberation Mono',monospace;">2</span>
<span class="t" style="left:276px;top:159.67px;font-size:12.5px;letter-spacing:-0.516px;color:#787878;font-family:'Liberation Mono',monospace;">3</span>
<span class="t" style="left:276px;top:174.67px;font-size:12.5px;letter-spacing:-0.516px;color:#787878;font-family:'Liberation Mono',monospace;">4</span>
<span class="t" style="left:276px;top:189.67px;font-size:12.5px;letter-spacing:-0.516px;color:#787878;font-family:'Liberation Mono',monospace;">5</span>
<span class="t" style="left:276px;top:204.67px;font-size:12.5px;letter-spacing:-0.516px;color:#787878;font-family:'Liberation Mono',monospace;">6</span>
<span class="t" style="left:276px;top:219.67px;font-size:12.5px;letter-spacing:-0.516px;color:#787878;font-family:'Liberation Mono',monospace;">7</span>
<span class="t" style="left:276px;top:234.67px;font-size:12.5px;letter-spacing:-0.516px;color:#787878;font-family:'Liberation Mono',monospace;">8</span>
<span class="t" style="left:276px;top:249.67px;font-size:12.5px;letter-spacing:-0.516px;color:#787878;font-family:'Liberation Mono',monospace;">9</span>
<span class="t" style="left:269px;top:264.67px;font-size:12.5px;letter-spacing:-0.508px;color:#787878;font-family:'Liberation Mono',monospace;">10</span>
<span class="t" style="left:269px;top:279.67px;font-size:12.5px;letter-spacing:-0.508px;color:#787878;font-family:'Liberation Mono',monospace;">11</span>
<span class="t" style="left:269px;top:294.67px;font-size:12.5px;letter-spacing:-0.508px;color:#787878;font-family:'Liberation Mono',monospace;">12</span>
<svg style="left:283px;top:207.5px" width="9" height="9"><use href="#fold"/></svg>
<svg style="left:283px;top:297.5px" width="9" height="9"><use href="#fold"/></svg>
<!-- code -->
<span class="t" style="left:295px;top:129.67px;font-size:12.5px;letter-spacing:-0.503px;font-family:'Liberation Mono',monospace;"><b style="color:#7f0055">public</b> <b style="color:#7f0055">class</b> Person {</span>
<span class="t" style="left:295px;top:144.67px;font-size:12.5px;letter-spacing:-0.503px;font-family:'Liberation Mono',monospace;">    String <span style="color:#0000c0">name</span>;</span>
<span class="t" style="left:295px;top:159.67px;font-size:12.5px;letter-spacing:-0.502px;font-family:'Liberation Mono',monospace;">    String <span style="color:#0000c0">address</span>;</span>
<span class="t" style="left:295px;top:174.67px;font-size:12.5px;letter-spacing:-0.502px;font-family:'Liberation Mono',monospace;">    String <span style="color:#0000c0">phoneNumber</span>;</span>
<span class="t" style="left:295px;top:204.67px;font-size:12.5px;letter-spacing:-0.502px;font-family:'Liberation Mono',monospace;">    <b style="color:#7f0055">public</b> Person(String <span style="color:#6a3e3e">name</span>, String <span style="color:#6a3e3e">address</span>, String <span style="color:#6a3e3e">phoneNumber</span>) {</span>
<span class="t" style="left:295px;top:219.67px;font-size:12.5px;letter-spacing:-0.504px;font-family:'Liberation Mono',monospace;">        <b style="color:#7f0055">this</b>.<span style="color:#0000c0">name</span> = <span style="color:#6a3e3e">name</span>;</span>
<span class="t" style="left:295px;top:234.67px;font-size:12.5px;letter-spacing:-0.504px;font-family:'Liberation Mono',monospace;">        <b style="color:#7f0055">this</b>.<span style="color:#0000c0">address</span> = <span style="color:#6a3e3e">address</span>;</span>
<span class="t" style="left:295px;top:249.67px;font-size:12.5px;letter-spacing:-0.503px;font-family:'Liberation Mono',monospace;">        <b style="color:#7f0055">this</b>.<span style="color:#0000c0">phoneNumber</span> = <span style="color:#6a3e3e">phoneNumber</span>;</span>
<span class="t" style="left:295px;top:264.67px;font-size:12.5px;letter-spacing:-0.503px;font-family:'Liberation Mono',monospace;">    }</span>
<span class="t" style="left:295px;top:294.67px;font-size:12.5px;letter-spacing:-0.502px;font-family:'Liberation Mono',monospace;">    <b style="color:#7f0055">public</b> String getName() {</span>
<div class="a" style="left:269px;top:309px;width:240px;height:10px;overflow:hidden">
<span class="t" style="left:0;top:0.67px;font-family:'Liberation Mono',monospace;font-size:12.5px;letter-spacing:-0.5px;color:#787878">13</span>
<span class="t" style="left:26px;top:0.67px;font-family:'Liberation Mono',monospace;font-size:12.5px;letter-spacing:-0.5px">        <b style="color:#7f0055">return</b> <span style="color:#0000c0">name</span>;</span>
</div>
<div id="tasklist" class="panel ina" style="left:1087px;top:78px;width:276px;height:129px">
<div class="tabbar" style="height:26px"></div>
</div>
<div class="a" style="left:1087px;top:78px;width:96px;height:27px;background:linear-gradient(#dde5ef 0,#e9eef6 30%,#fbfcfe 80%,#fff 100%);border-radius:8px 8px 0 0"></div>
<!-- tab -->
<svg style="left:1095px;top:85px" width="10" height="15" viewBox="0 0 10 15"><path d="M0.6 0.6H9.4V12.6Q7.4 12 6 13.6Q4.4 15 2.4 14L0.6 12.6z" fill="#e9e7f6" stroke="#55506e" stroke-width="0.9"/><path d="M0.8 11.5L3 14Q5 14.4 6 13.4Q7.4 12 9.2 12.4V10z" fill="#a9a3d6"/><path d="M2.2 2.8H7.8M2.2 4.6H7.8M2.2 6.4H7.8M2.2 8.2H7.8M2.2 10H7.8" stroke="#4a4a5a" stroke-width="0.8"/></svg>
<span class="t" style="left:1112px;top:83.84px;font-size:12px;letter-spacing:-0.354px;">Task List</span>
<svg style="left:1164px;top:87px" width="10" height="10"><use href="#xclose"/></svg>
<svg style="left:1315px;top:86px" width="10" height="4"><use href="#minb"/></svg>
<svg style="left:1338px;top:86px" width="10" height="10"><use href="#maxb"/></svg>
<!-- toolbar -->
<svg style="left:1104px;top:108px" width="14" height="16" viewBox="0 0 14 16"><path d="M0.8 6L3 3.6H9.6V15H0.8z" fill="#eef0fa" stroke="#8e94b8" stroke-width="0.9"/><path d="M0.8 6H7.6V15" fill="none" stroke="#b4b9d6" stroke-width="0.8"/><use href="#star" x="6" y="0" width="8" height="8"/></svg>
<svg style="left:1125px;top:114px" width="7" height="4" fill="#111"><use href="#dd"/></svg>
<div class="a" style="left:1138px;top:108px;width:1px;height:18px;background:#8a8a8a"></div>
<div class="a" style="left:1144px;top:106px;width:23px;height:21px;background:#cce4f7;border:1px solid #9ccffa"></div>
<svg style="left:1148px;top:109px" width="15" height="15" viewBox="0 0 15 15"><path d="M1 3.4L3 0.8H7L9 3.4z" fill="#f3c9a0" stroke="#c08a5a" stroke-width="0.6"/><rect x="1" y="3.4" width="8" height="2.6" fill="#b8d0ea" stroke="#6a8ab8" stroke-width="0.7"/><path d="M5 6V13M5 8.6H8M5 12.6H8" fill="none" stroke="#6a7a9a" stroke-width="0.9"/><rect x="8.2" y="7.4" width="2.4" height="2.4" fill="#eef2fa" stroke="#6a7a9a" stroke-width="0.7"/><rect x="8.2" y="11.4" width="2.4" height="2.4" fill="#eef2fa" stroke="#6a7a9a" stroke-width="0.7"/><path d="M11.6 8.6H14.6M11.6 12.6H14.6" stroke="#8a9ab8" stroke-width="0.9"/></svg>
<svg style="left:1171px;top:109px" width="15" height="15" viewBox="0 0 15 15"><circle cx="4" cy="3.6" r="3" fill="#f6f8fc" stroke="#4a6a9a" stroke-width="0.9"/><path d="M4 1.8V3.8H5.6" fill="none" stroke="#4a6a9a" stroke-width="0.7"/><path d="M5 6.8V13M5 8.6H8M5 12.6H8" fill="none" stroke="#6a7a9a" stroke-width="0.9"/><rect x="8.2" y="7.4" width="2.4" height="2.4" fill="#eef2fa" stroke="#6a7a9a" stroke-width="0.7"/><rect x="8.2" y="11.4" width="2.4" height="2.4" fill="#eef2fa" stroke="#6a7a9a" stroke-width="0.7"/><path d="M9 3.6H14.6M11.6 8.6H14.6M11.6 12.6H14.6" stroke="#8a9ab8" stroke-width="0.9"/></svg>
<div class="a" style="left:1192px;top:108px;width:1px;height:18px;background:#8a8a8a"></div>
<svg style="left:1202px;top:110px" width="14" height="14" viewBox="0 0 14 14"><circle cx="4.4" cy="3.8" r="3" fill="#bdbdbd"/><circle cx="10" cy="5.4" r="3.2" fill="#a6a6a6"/><circle cx="5" cy="9.8" r="3.6" fill="#7a68b4"/><ellipse cx="4" cy="2.8" rx="1.8" ry="1" fill="#dcdcdc"/><ellipse cx="9.6" cy="4.2" rx="2" ry="1.1" fill="#cfcfcf"/><ellipse cx="4.6" cy="8.4" rx="2.2" ry="1.2" fill="#b4a8dc"/></svg>
<div class="a" style="left:1223px;top:108px;width:1px;height:18px;background:#8a8a8a"></div>
<svg style="left:1232px;top:109px" width="16" height="15" viewBox="0 0 16 15"><path d="M3.4 8.4L6.6 12.4L12.6 3.4" fill="none" stroke="#2f5fb4" stroke-width="1.6"/><path d="M0.8 1L15 14" stroke="#1f2f8a" stroke-width="1.2"/></svg>
<svg style="left:1254px;top:108px" width="18" height="16" viewBox="0 0 18 16"><circle cx="4.4" cy="2.6" r="2" fill="#f0a83a" stroke="#b87418" stroke-width="0.6"/><path d="M2 5.4H6.8L7.4 10.6H6.2V15.4H2.6V10.6H1.4z" fill="#f0a83a" stroke="#b87418" stroke-width="0.6"/><circle cx="12.4" cy="2.6" r="2" fill="#8a8a8a" stroke="#5a5a5a" stroke-width="0.6"/><path d="M10 5.4H14.8L15.4 10.6H14.2V15.4H10.6V10.6H9.4z" fill="#8a8a8a" stroke="#5a5a5a" stroke-width="0.6"/><path d="M8.6 0.6L17.4 11" stroke="#1f2f8a" stroke-width="1.2"/></svg>
<svg style="left:1279px;top:110px" width="14" height="14"><use href="#collapse"/></svg>
<div class="a" style="left:1300px;top:108px;width:1px;height:18px;background:#8a8a8a"></div>
<svg style="left:1308px;top:108px" width="17" height="16" viewBox="0 0 17 16"><path d="M8 2.6Q8 1 12 1Q16 1 16 2.6V13Q16 14.6 12 14.6Q8 14.6 8 13z" fill="#7fb0e6" stroke="#3f6fb4" stroke-width="0.8"/><ellipse cx="12" cy="2.8" rx="3.8" ry="1.5" fill="#cfe2f8" stroke="#3f6fb4" stroke-width="0.6"/><path d="M1 4.6H5.6V2L10 6L5.6 9.6V7.4H1z" fill="#fbe28a" stroke="#b8862a" stroke-width="0.8" stroke-linejoin="round"/><path d="M9.6 9.8H5.4V7.6L1 11.4L5.4 15V12.6H9.6z" fill="#fbe28a" stroke="#b8862a" stroke-width="0.8" stroke-linejoin="round"/></svg>
<svg style="left:1340px;top:112px" width="11" height="6"><use href="#vmenu"/></svg>
<!-- find row -->
<div class="a" style="left:1093px;top:133px;width:97px;height:19px;background:#fff;border:1px solid #8a8a8a"></div>
<span class="t" style="left:1104.3px;top:134.84px;font-size:12px;letter-spacing:-0.336px;color:#222;">Find</span>
<svg style="left:1173px;top:136px" width="13" height="13" viewBox="0 0 13 13"><circle cx="4.8" cy="4.8" r="3.8" fill="#fafcfe" stroke="#8a8a8a" stroke-width="1"/><path d="M7.6 7.6L11.8 11.8" stroke="#5a5a5a" stroke-width="1.8"/></svg>
<svg style="left:1204px;top:138px" width="5" height="9"><use href="#bca"/></svg>
<span class="t" style="left:1218px;top:134.84px;font-size:12px;letter-spacing:0.052px;color:#1f4fc8;">All</span>
<svg style="left:1244px;top:138px" width="5" height="9"><use href="#bca"/></svg>
<span class="t" style="left:1258.4px;top:134.84px;font-size:12px;letter-spacing:-0.108px;color:#1f4fc8;">Activate...</span>
<svg style="left:1343px;top:135px" width="16" height="16" viewBox="0 0 16 16"><circle cx="8" cy="8" r="6.8" fill="#fdfefe" stroke="#2a5a9a" stroke-width="1.3"/></svg>
<span class="t" style="left:1347.6px;top:135.52px;font-size:11.5px;color:#1f4f94;font-weight:bold;">?</span>

<div id="outline" class="panel ina" style="left:1087px;top:211px;width:276px;height:129px">
<div class="tabbar" style="height:26px"></div>
<div class="a" style="left:28px;top:49px;width:67px;height:18px;background:#d9d9d9"></div>
<div class="a" style="left:256px;top:49px;width:16px;height:77px;background:#f0f0f0"></div>
<div class="a" style="left:257px;top:66px;width:14px;height:17px;background:#c9c9c9"></div>
</div>
<div class="a" style="left:1087px;top:211px;width:90px;height:27px;background:linear-gradient(#dde5ef 0,#e9eef6 30%,#fbfcfe 80%,#fff 100%);border-radius:8px 8px 0 0"></div>
<svg style="left:1093px;top:218px" width="13" height="15" viewBox="0 0 13 15"><rect x="0.6" y="0.6" width="4.8" height="4.8" fill="#fff" stroke="#2a5fb0" stroke-width="1"/><rect x="0.6" y="9.4" width="4.8" height="4.8" fill="#fff" stroke="#2a5fb0" stroke-width="1"/><path d="M7 3H12.6M7 12H12.6M10 7.4H12.6" stroke="#2a5fb0" stroke-width="1"/><rect x="6.6" y="6.4" width="2" height="2" fill="#fff" stroke="#2a5fb0" stroke-width="0.8"/></svg>
<span class="t" style="left:1111.6px;top:216.84px;font-size:12px;letter-spacing:0.067px;">Outline</span>
<svg style="left:1159px;top:220px" width="10" height="10"><use href="#xclose"/></svg>
<svg style="left:1315px;top:219px" width="10" height="4"><use href="#minb"/></svg>
<svg style="left:1338px;top:219px" width="10" height="10"><use href="#maxb"/></svg>
<!-- outline toolbar -->
<svg style="left:1173px;top:243px" width="14" height="14"><use href="#gballs"/></svg>
<svg style="left:1196px;top:244px" width="14" height="14"><use href="#collapse"/></svg>
<svg style="left:1216px;top:242px" width="18" height="17" viewBox="0 0 18 17"><path d="M2.6 1.6V13M0.6 10.6L2.6 13.6L4.6 10.6" fill="none" stroke="#4a5a6a" stroke-width="1"/></svg>
<span class="t" style="left:1222.5px;top:238.84px;font-size:12px;color:#2a8a6a;font-weight:bold;">a</span><span class="t" style="left:1226.5px;top:246.34px;font-size:12px;color:#9a3a9a;font-weight:bold;">z</span>
<svg style="left:1240px;top:243px" width="16" height="16" viewBox="0 0 16 16"><circle cx="8" cy="8" r="5" fill="#5fa8ec" stroke="#2a6ab8" stroke-width="0.8"/><path d="M5.6 6H10.4M8 6V11" stroke="#fff" stroke-width="1.4"/><path d="M1 0.8L15 15" stroke="#1f2f8a" stroke-width="1.3"/></svg>
<svg style="left:1265px;top:243px" width="16" height="16" viewBox="0 0 16 16"><circle cx="6" cy="9" r="3.4" fill="#8a8a8a" stroke="#5a5a5a" stroke-width="0.7"/><path d="M0.6 3L12 15" stroke="#1f2f8a" stroke-width="1.3"/><path d="M13.6 1.6Q11 0.6 11 2.4Q11 3.4 12.4 3.8Q13.8 4.4 13.6 5.4Q13.2 6.6 10.8 5.8" fill="none" stroke="#2a5fb0" stroke-width="1"/></svg>
<svg style="left:1289px;top:246px" width="10" height="10" viewBox="0 0 10 10"><circle cx="5" cy="5" r="4.2" fill="#4fae5a" stroke="#2a7a3a" stroke-width="0.8"/><ellipse cx="4.4" cy="3.6" rx="2.2" ry="1.3" fill="#9ad6a0"/></svg>
<svg style="left:1310px;top:243px" width="16" height="16" viewBox="0 0 16 16"><circle cx="6.4" cy="9" r="3.4" fill="#8a8a8a" stroke="#5a5a5a" stroke-width="0.7"/><path d="M1 3L12.4 15" stroke="#1f2f8a" stroke-width="1.3"/><path d="M11.6 0.8V5.6H14.6" fill="none" stroke="#2a5fb0" stroke-width="1.2"/></svg>
<svg style="left:1341px;top:245px" width="11" height="6"><use href="#vmenu"/></svg>
<!-- outline tree -->
<svg style="left:1099px;top:267px" width="9" height="6"><use href="#chv"/></svg>
<svg style="left:1119px;top:263px" width="13" height="13"><use href="#clsC"/></svg>
<span class="t" style="left:1145px;top:261.84px;font-size:12px;letter-spacing:-0.422px;">Person</span>
<svg style="left:1148px;top:285px" width="8" height="7" viewBox="0 0 8 7"><path d="M4 1L7 6H1z" fill="#e8f2fc" stroke="#2a6ab8" stroke-width="1.3" stroke-linejoin="round"/></svg>
<span class="t" style="left:1170.6px;top:279.84px;font-size:12px;letter-spacing:-0.158px;">name</span><span class="t" style="left:1202px;top:279.84px;font-size:12px;letter-spacing:-0.127px;color:#957d47;">: String</span>
<svg style="left:1148px;top:303px" width="8" height="7" viewBox="0 0 8 7"><path d="M4 1L7 6H1z" fill="#e8f2fc" stroke="#2a6ab8" stroke-width="1.3" stroke-linejoin="round"/></svg>
<span class="t" style="left:1170.6px;top:297.84px;font-size:12px;letter-spacing:-0.529px;">address</span><span class="t" style="left:1212px;top:297.84px;font-size:12px;letter-spacing:-0.127px;color:#957d47;">: String</span>
<svg style="left:1148px;top:321px" width="8" height="7" viewBox="0 0 8 7"><path d="M4 1L7 6H1z" fill="#e8f2fc" stroke="#2a6ab8" stroke-width="1.3" stroke-linejoin="round"/></svg>
<span class="t" style="left:1170.6px;top:315.84px;font-size:12px;letter-spacing:0.122px;">phoneNumber</span><span class="t" style="left:1250.5px;top:315.84px;font-size:12px;letter-spacing:-0.127px;color:#957d47;">: String</span>
<svg style="left:1158px;top:334px" width="6" height="3" viewBox="0 0 6 3"><path d="M5 1Q3 0 1.4 1.4" fill="none" stroke="#2f8a3c" stroke-width="1.2"/></svg>
<svg style="left:1348px;top:267px" width="8" height="6"><use href="#sbup"/></svg>
<svg style="left:1348px;top:326px" width="8" height="6"><use href="#sbdn"/></svg>
<div id="console" class="panel ina" style="left:254px;top:343px;width:1109px;height:356px">
<div class="tabbar" style="height:26px"></div>
<div class="a" style="left:2px;top:42px;width:1104px;height:1px;background:#6e6e6e"></div>
<div class="a" style="left:1089px;top:44px;width:16px;height:292px;background:#f0f0f0"></div>
<div class="a" style="left:2px;top:336px;width:1087px;height:16px;background:#f0f0f0"></div>
<div class="a" style="left:1089px;top:336px;width:16px;height:16px;background:#f0f0f0"></div>
</div>
<svg style="left:1348px;top:395px" width="8" height="6" opacity="0.4"><use href="#sbup"/></svg>
<svg style="left:1348px;top:668px" width="8" height="6" opacity="0.4"><use href="#sbdn"/></svg>
<svg style="left:261px;top:683.5px" width="6" height="8"><use href="#sblt"/></svg>
<svg style="left:1332px;top:683.5px" width="6" height="8"><use href="#sbrt"/></svg>
<div class="a" style="left:495px;top:343px;width:95px;height:27px;background:linear-gradient(#dde5ef 0,#e9eef6 30%,#fbfcfe 80%,#fff 100%);border-radius:8px 8px 0 0"></div>
<!-- tabs -->
<svg style="left:258px;top:349px" width="16" height="16" viewBox="0 0 16 16" opacity="0.6"><path d="M3.4 0.8H12.8Q11.6 4 11.8 8Q12 12 13.4 14.6H10.6L10.2 11H6.4L6 14.6H3.4z" fill="#e9eef6" stroke="#7a86a6" stroke-width="0.9"/><circle cx="5.6" cy="4" r="2.7" fill="#e83a4a"/><path d="M3.8 15.4L0.8 15.4L3.6 9.6L6.6 15.4z" fill="#f6c04a" stroke="#c98a1c" stroke-width="0.7"/><rect x="3.3" y="11.4" width="0.8" height="2" fill="#3a2a08"/></svg>
<span class="t" style="left:279px;top:348.84px;font-size:12px;letter-spacing:-0.148px;color:#8e8e8e;">Problems</span>
<span class="t" style="left:341.5px;top:348.67px;font-size:12.5px;letter-spacing:-1.703px;color:#7a9ac8;">@</span>
<span class="t" style="left:358px;top:348.84px;font-size:12px;letter-spacing:-0.386px;color:#8e8e8e;">Javadoc</span>
<svg style="left:411px;top:349px" width="15" height="16" viewBox="0 0 15 16" opacity="0.6"><path d="M0.8 0.8H7.4L10.4 3.8V12.6H0.8z" fill="#fdfcf4" stroke="#b8a06a" stroke-width="0.9"/><path d="M7.4 0.8V3.8H10.4" fill="none" stroke="#b8a06a" stroke-width="0.8"/><path d="M4 5Q2.8 5.2 2.8 7T4 9M5 6.4H8M5 8H8" fill="none" stroke="#6a86b8" stroke-width="0.8"/><path d="M6.6 11H10.4V8.8L14.4 12.2L10.4 15.6V13.4H6.6z" fill="#fbe28a" stroke="#c8891a" stroke-width="0.8" stroke-linejoin="round"/></svg>
<span class="t" style="left:430px;top:348.84px;font-size:12px;letter-spacing:-0.155px;color:#8e8e8e;">Declaration</span>
<svg style="left:500px;top:350px" width="14" height="14" viewBox="0 0 14 14"><rect x="1" y="1" width="12" height="8.6" rx="1" fill="#fdfdfd" stroke="#2a56b0" stroke-width="2"/><path d="M3.6 3.8H10.4M3.6 6.2H8.6" stroke="#3a3a4a" stroke-width="1.1"/><path d="M5.4 10.4H8.6V12H11V13.6H3V12H5.4z" fill="#2a56b0"/></svg>
<span class="t" style="left:518.6px;top:348.84px;font-size:12px;letter-spacing:-0.176px;">Console</span>
<svg style="left:570px;top:352px" width="10" height="10"><use href="#xclose"/></svg>
<!-- console toolbar -->
<svg style="left:1016px;top:350px" width="12" height="12" viewBox="0 0 12 12"><rect x="0.6" y="0.6" width="10.8" height="10.8" rx="1.6" fill="#dedede" stroke="#c4c4c4" stroke-width="0.9"/><rect x="2" y="2" width="8" height="8" fill="#b6b6b6"/></svg>
<svg style="left:1037px;top:349px" width="15" height="14" viewBox="0 0 15 14"><path d="M2.8 2.6L12.2 11.4M12.2 2.6L2.8 11.4" stroke="#767676" stroke-width="3.3" stroke-linecap="round"/></svg>
<svg style="left:1059px;top:348px" width="17" height="16" viewBox="0 0 17 16"><path d="M2.4 2.4L9.6 9.2M9.6 2.4L2.4 9.2" stroke="#8a8a8a" stroke-width="3.2" stroke-linecap="round"/><path d="M2.4 2.4L9.6 9.2M9.6 2.4L2.4 9.2" stroke="#e4e4e4" stroke-width="1.6" stroke-linecap="round"/><path d="M7.4 7.4L14.6 14M14.6 7.4L7.4 14" stroke="#767676" stroke-width="3.2" stroke-linecap="round"/></svg>
<div class="a" style="left:1081px;top:347px;width:1px;height:18px;background:#8a8a8a"></div>
<svg style="left:1091px;top:348px" width="16" height="16" viewBox="0 0 16 16"><path d="M0.8 0.8H7.6L10.6 3.8V14H0.8z" fill="#fffefa" stroke="#c8b888" stroke-width="0.9"/><path d="M2.6 4.5H6.6M2.6 7H8.6M2.6 9.5H8.6M2.6 12H6" stroke="#4a6aa8" stroke-width="1"/><path d="M8.6 9.4L14.6 15.2M14.6 9.4L8.6 15.2" stroke="#6a6a6a" stroke-width="1.9"/></svg>
<svg style="left:1113px;top:348px" width="17" height="16" viewBox="0 0 17 16"><rect x="3.4" y="0.8" width="12.6" height="13.6" fill="#f6f8fc" stroke="#6a7a9a" stroke-width="0.9"/><path d="M11.6 0.8V14.4" stroke="#6a7a9a" stroke-width="0.9"/><rect x="12.8" y="3" width="2" height="2.6" fill="#5a7ab8"/><rect x="12.8" y="7" width="2" height="2.6" fill="#5a7ab8"/><rect x="12.8" y="11" width="2" height="2" fill="#5a7ab8"/><path d="M2.8 10.4V8.4Q2.8 6.4 4.6 6.4Q6.4 6.4 6.4 8.4V10.4" fill="none" stroke="#c8962a" stroke-width="1.3"/><rect x="1" y="10" width="7.2" height="5.4" rx="0.8" fill="#f6c04a" stroke="#b8821a" stroke-width="0.8"/><rect x="4.1" y="11.6" width="1.1" height="2.2" fill="#7a5210"/></svg>
<svg style="left:1137px;top:348px" width="16" height="16" viewBox="0 0 16 16"><path d="M0.8 0.8H8.6L10.8 3V13.6H0.8z" fill="#fdfcf4" stroke="#b8a878" stroke-width="0.9"/><path d="M2.6 4H7.6M2.6 6.2H7.6M2.6 8.4H5.4M2.6 11H4.2" stroke="#5a78b0" stroke-width="0.9"/><path d="M13.4 3.4V9.6H8" fill="none" stroke="#e8b03a" stroke-width="2.2"/><path d="M9.6 6.2L5.6 9.6L9.6 13z" fill="#e8b03a" stroke="#b8821a" stroke-width="0.5"/></svg>
<div class="a" style="left:1156px;top:345px;width:23px;height:21px;background:#cce4f7;border:1px solid #9ccffa"></div>
<div class="a" style="left:1178px;top:345px;width:24px;height:21px;background:#cce4f7;border:1px solid #9ccffa"></div>
<svg style="left:1160px;top:348px" width="16" height="16" viewBox="0 0 16 16"><rect x="4.6" y="0.8" width="10.6" height="8" rx="0.8" fill="#fdfdfd" stroke="#3a5a9a" stroke-width="1.1"/><path d="M6.8 3.4H13M6.8 5.8H11" stroke="#3a3a4a" stroke-width="1"/><rect x="1" y="7.6" width="6" height="4.4" rx="0.5" fill="#7aa4e8" stroke="#2a4a9a" stroke-width="0.9"/><path d="M3.2 12.2H5V13.6H6.8V14.8H1.4V13.6H3.2z" fill="#2a4a8a"/></svg>
<svg style="left:1183px;top:348px" width="16" height="16" viewBox="0 0 16 16"><rect x="4.6" y="0.8" width="10.6" height="8" rx="0.8" fill="#fdfdfd" stroke="#3a5a9a" stroke-width="1.1"/><path d="M6.6 2.6L10 6.2M10 2.6L6.6 6.2" stroke="#e02a2a" stroke-width="1.6"/><path d="M11.6 3.4H13.6M11.6 5.8H13.6" stroke="#3a3a4a" stroke-width="1"/><rect x="1" y="7.6" width="6" height="4.4" rx="0.5" fill="#7aa4e8" stroke="#2a4a9a" stroke-width="0.9"/><path d="M3.2 12.2H5V13.6H6.8V14.8H1.4V13.6H3.2z" fill="#2a4a8a"/></svg>
<div class="a" style="left:1204px;top:347px;width:1px;height:18px;background:#8a8a8a"></div>
<svg style="left:1215px;top:348px" width="16" height="16" viewBox="0 0 16 16"><rect x="0.8" y="4.6" width="12" height="10" fill="#fdfdfd" stroke="#3a5a9a" stroke-width="1"/><rect x="1.2" y="5" width="11.2" height="2.4" fill="#3a7ad0"/><path d="M5 9.6L8 12.4" stroke="#5a6a5a" stroke-width="0.9"/><path d="M8.4 6.6L10.6 2.4L12.4 0.8L15 3.4L13.6 5L9.8 8z" fill="#3aa84a" stroke="#1f7a2a" stroke-width="0.7"/></svg>
<svg style="left:1238px;top:348px" width="15" height="15" viewBox="0 0 15 15"><rect x="0.8" y="0.8" width="13.4" height="9.6" rx="0.8" fill="#efefef" stroke="#8a8a8a" stroke-width="1.3"/><path d="M3.6 4H11.4M3.6 6.6H9.4" stroke="#9a9a9a" stroke-width="1.1"/><path d="M6 10.8H9V12.8H11.6V14.2H3.4V12.8H6z" fill="#7a7a7a"/></svg>
<svg style="left:1260px;top:355px" width="7" height="4" fill="#777"><use href="#dd"/></svg>
<svg style="left:1276px;top:348px" width="16" height="16" viewBox="0 0 16 16"><rect x="0.6" y="3.4" width="12.6" height="11" fill="url(#gWin)" stroke="#b59a4c" stroke-width="0.9"/><rect x="1" y="3.8" width="11.8" height="2.4" fill="#4a90d9"/><path d="M13 8Q12 13 7 14.2L13 14.2z" fill="#f2d78c"/><use href="#star" x="8" y="0" width="8" height="8"/></svg>
<svg style="left:1298px;top:355px" width="7" height="4" fill="#111"><use href="#dd"/></svg>
<svg style="left:1315px;top:351px" width="10" height="4"><use href="#minb"/></svg>
<svg style="left:1338px;top:351px" width="10" height="10"><use href="#maxb"/></svg>
<!-- console text -->
<span class="t" style="left:258px;top:370.84px;font-size:12px;letter-spacing:0.023px;">&lt;terminated&gt;</span>
<span class="t" style="left:334.4px;top:370.84px;font-size:12px;letter-spacing:0.011px;">New_configuration</span>
<span class="t" style="left:438.5px;top:370.84px;font-size:12px;letter-spacing:-0.711px;">(49)</span>
<span class="t" style="left:461.7px;top:370.84px;font-size:12px;letter-spacing:-0.034px;">&#91;Java Application&#93;</span>
<span class="t" style="left:559.2px;top:370.84px;font-size:12px;letter-spacing:-0.206px;">C:\Program</span>
<span class="t" style="left:623.2px;top:370.84px;font-size:12px;letter-spacing:-0.212px;">Files\Java\jre1.8.0_131\bin\javaw.exe</span>
<span class="t" style="left:819.3px;top:370.84px;font-size:12px;letter-spacing:-0.452px;">(May 10, 2017, 8:31:29 PM)</span>
<span class="t" style="left:259px;top:388.67px;font-size:12.5px;letter-spacing:-0.501px;font-family:'Liberation Mono',monospace;">Customer 1:</span>
<span class="t" style="left:259px;top:403.67px;font-size:12.5px;letter-spacing:-0.501px;font-family:'Liberation Mono',monospace;">Name : Mark Smith, Address: 430 Gr. St., Phone Number: 9588554455</span>
<span class="t" style="left:259px;top:418.67px;font-size:12.5px;letter-spacing:-0.501px;font-family:'Liberation Mono',monospace;">Customer Number: 12570, Mailing list needed: true</span>
<span class="t" style="left:259px;top:448.67px;font-size:12.5px;letter-spacing:-0.501px;font-family:'Liberation Mono',monospace;">Customer 2:</span>
<span class="t" style="left:259px;top:463.67px;font-size:12.5px;letter-spacing:-0.501px;font-family:'Liberation Mono',monospace;">Name : Mark Smith, Address: 430 Gr. St., Phone Number: 9588554455</span>
<span class="t" style="left:259px;top:478.67px;font-size:12.5px;letter-spacing:-0.501px;font-family:'Liberation Mono',monospace;">Customer Number: 12570, Mailing list needed: true</span>
<!-- status bar -->
<span class="t" style="left:3px;top:704.84px;font-size:12px;letter-spacing:0.040px;">(default package) - project/src</span>
<svg style="left:1081px;top:707px" width="2" height="17" viewBox="0 0 2 17"><rect x="0" y="0" width="1" height="1" fill="#8a8678"/><rect x="0" y="3" width="1" height="1" fill="#8a8678"/><rect x="0" y="6" width="1" height="1" fill="#8a8678"/><rect x="0" y="9" width="1" height="1" fill="#8a8678"/><rect x="0" y="12" width="1" height="1" fill="#8a8678"/><rect x="0" y="15" width="1" height="1" fill="#8a8678"/></svg>
<div id="taskbar">
<div class="a" style="left:48px;top:0;width:344px;height:40px;background:#363636"></div>
<div class="a" style="left:1121px;top:0;width:47px;height:40px;background:#30343b"></div>
<!-- running underlines -->
<div class="a" style="left:447px;top:38px;width:39px;height:2px;background:#76b9ed"></div>
<div class="a" style="left:495px;top:38px;width:40px;height:2px;background:#76b9ed"></div>
<div class="a" style="left:691px;top:38px;width:40px;height:2px;background:#76b9ed"></div>
<div class="a" style="left:886px;top:38px;width:38px;height:2px;background:#76b9ed"></div>
<div class="a" style="left:933px;top:38px;width:39px;height:2px;background:#76b9ed"></div>
<div class="a" style="left:981px;top:38px;width:39px;height:2px;background:#76b9ed"></div>
<div class="a" style="left:1029px;top:38px;width:39px;height:2px;background:#76b9ed"></div>
<div class="a" style="left:1077px;top:38px;width:31px;height:2px;background:#76b9ed"></div>
<div class="a" style="left:1109px;top:38px;width:6px;height:2px;background:#5f9fd4"></div>
<div class="a" style="left:1121px;top:38px;width:47px;height:2px;background:#8ac6f2"></div>
<div class="a" style="left:1361px;top:0;width:1px;height:40px;background:#4a4e55"></div>
</div>
<svg width="0" height="0" style="left:0;top:0"><defs><linearGradient id="gEcl" x1="0" y1="0" x2="0" y2="1"><stop offset="0" stop-color="#2a1f50"/><stop offset="0.6" stop-color="#352a66"/><stop offset="1" stop-color="#5a4a9a"/></linearGradient></defs></svg>
<!-- windows logo -->
<svg style="left:16px;top:739px" width="17" height="17" viewBox="0 0 17 17"><path d="M0 2.4L7 1.4V8H0zM8 1.2L17 0V8H8zM0 9H7V15.6L0 14.6zM8 9H17V17L8 15.8z" fill="#fff"/></svg>
<!-- cortana -->
<svg style="left:57px;top:738px" width="22" height="22" viewBox="0 0 22 22"><circle cx="11" cy="11" r="8.6" fill="none" stroke="#f2f2f2" stroke-width="2.6"/></svg>
<span class="t" style="left:88.3px;top:741.10px;font-size:15px;letter-spacing:-0.176px;color:#a6a6a6;">I’m Cortana. Ask me anything.</span>
<!-- task view -->
<svg style="left:406px;top:740px" width="21" height="15" viewBox="0 0 21 15"><rect x="4.6" y="0.8" width="11.8" height="13.4" fill="none" stroke="#fff" stroke-width="1.5"/><path d="M2.6 2.4H0.8V12.6H2.6M18.4 2.4H20.2V12.6H18.4" fill="none" stroke="#fff" stroke-width="1.4"/></svg>
<!-- edge -->
<svg style="left:456px;top:737px" width="21" height="21" viewBox="0 0 21 21"><path d="M0.8 9.4Q1.6 1 10.4 0.6Q19.8 0.8 20.2 11V13H7.4Q7.8 17 12.6 17.2Q16 17.2 19 15.4V19.4Q15.6 21 11.6 20.8Q3.4 20.2 3 12.6Q3.2 8 7.4 6Q5 6.8 3.4 9.6zM7.4 9H14.2Q14.2 5.4 10.8 5.2Q7.8 5.4 7.4 9z" fill="#1e88e5" fill-rule="evenodd"/></svg>
<!-- explorer -->
<svg style="left:504px;top:738px" width="22" height="20" viewBox="0 0 22 20"><path d="M0.6 1H8L10 3H21.4V7H0.6z" fill="#e8b84a"/><rect x="0.6" y="4" width="20.8" height="13.6" fill="#fbd772"/><path d="M4.6 10.6H17.4V19.4H13.6V15H8.4V19.4H4.6z" fill="#3a9be8"/></svg>
<!-- eclipse pinned -->
<svg style="left:552px;top:736px" width="25" height="24" viewBox="0 0 25 24"><circle cx="11.2" cy="12" r="11" fill="#f7941e"/><circle cx="13.6" cy="12" r="10.8" fill="url(#gEcl)"/><rect x="3.4" y="8.9" width="20.8" height="1.4" fill="#fff"/><rect x="3" y="11.1" width="21.4" height="1.4" fill="#fff"/><rect x="3.4" y="13.3" width="20.8" height="1.4" fill="#fff"/></svg>
<!-- winrar -->
<svg style="left:601px;top:738px" width="24" height="21" viewBox="0 0 24 21"><path d="M2 1.4L22.6 0.8L23.4 6.4L1 7z" fill="#7a2a86" stroke="#2a1430" stroke-width="0.8"/><path d="M1 7.4L23.4 6.8V13L1 13.6z" fill="#1f3fa8" stroke="#10183a" stroke-width="0.8"/><path d="M1 14L23.4 13.4L22.6 19.6L2 20.2z" fill="#1f8a2f" stroke="#10301a" stroke-width="0.8"/><path d="M3 3.2L22 2.6M2 9.6L22.6 9M3 16.4L22 15.8" stroke="#e4dce8" stroke-width="1.1" opacity="0.85"/><path d="M10.2 0.8L13.4 0.8L14.4 20.2L11.2 20.2z" fill="#b8862a" stroke="#5a3a10" stroke-width="0.5"/><rect x="10.4" y="7.6" width="4.2" height="4.6" rx="0.8" fill="#d8c080" stroke="#4a3410" stroke-width="0.6"/></svg>
<!-- onenote -->
<svg style="left:650px;top:737px" width="24" height="22.5" viewBox="0 0 24 20" preserveAspectRatio="none"><rect x="11" y="1.6" width="12" height="16.8" fill="#fff" stroke="#7a2a8a" stroke-width="0.8"/><path d="M18.6 4H21.6M18.6 7.4H21.6M18.6 10.8H21.6M18.6 14.2H21.6" stroke="#9a4aaa" stroke-width="2"/><path d="M0.6 2L14.6 0V20L0.6 18z" fill="#80397b"/><path d="M4.2 14V6H5.8L9.4 11.4V6H11V14H9.4L5.8 8.6V14z" fill="#fff"/></svg>
<!-- chrome -->
<svg style="left:700px;top:736px" width="24" height="24" viewBox="0 0 24 24"><circle cx="12" cy="12" r="11.4" fill="#e8453c"/><path d="M12 12L2.2 6.2A11.4 11.4 0 0 0 10.4 23.3z" fill="#34a853"/><path d="M12 12L10.4 23.3A11.4 11.4 0 0 0 22.4 7.2H12z" fill="#fbc116"/><circle cx="12" cy="12" r="5.4" fill="#fff"/><circle cx="12" cy="12" r="4.2" fill="#4a8af4"/></svg>
<!-- paint -->
<svg style="left:748px;top:736px" width="24" height="24" viewBox="0 0 24 24"><path d="M1 14Q1.6 6.6 10 5.6Q18 5.4 19.6 10.4Q20.4 14.6 15.6 14.8Q13 15 13.4 17.6Q13.4 21.4 8.4 21.2Q1.4 20.4 1 14z" fill="#e6eef6" stroke="#8a9ab0" stroke-width="0.8"/><circle cx="5.4" cy="12" r="1.7" fill="#e83a3a"/><circle cx="9.6" cy="9" r="1.7" fill="#3a7ae8"/><circle cx="14.4" cy="9.4" r="1.7" fill="#f0c030"/><circle cx="6.4" cy="16.6" r="1.7" fill="#3aa84a"/><path d="M12 20L19.6 5.2L21.4 6L14.6 21z" fill="#e8902a"/><path d="M19.6 5.2L21.6 0.8L23 1.6L21.4 6z" fill="#c8a070"/></svg>
<!-- word -->
<svg style="left:797px;top:737px" width="23" height="22.5" viewBox="0 0 23 20" preserveAspectRatio="none"><rect x="10" y="1.6" width="12.4" height="16.8" fill="#fff" stroke="#2b579a" stroke-width="0.8"/><path d="M13.6 4.6H20.6M13.6 7.4H20.6M13.6 10.2H20.6M13.6 13H20.6M13.6 15.6H20.6" stroke="#2b579a" stroke-width="1.2"/><path d="M0.6 2L13.6 0V20L0.6 18z" fill="#2b579a"/><path d="M2.8 6.4H4.4L5.4 11.6L6.6 6.4H8L9.2 11.6L10.2 6.4H11.6L10 13.8H8.4L7.2 8.8L6 13.8H4.4z" fill="#fff"/></svg>
<!-- acrobat -->
<svg style="left:845px;top:737px" width="22" height="21" viewBox="0 0 22 21"><rect x="0.8" y="0.8" width="20.4" height="19.4" fill="#2a0a0a" stroke="#e02020" stroke-width="1.5"/><path d="M4.6 15.6Q7.6 13.6 9.6 9.4Q11 6 10.4 4.6Q9.6 3.8 9.4 5.4Q9.6 8.6 12.4 11.6Q15 13.6 17.4 13Q18 12.2 16.6 12Q12 12 6 14.4Q4 15.4 4.6 15.6z" fill="none" stroke="#f4f4f4" stroke-width="1.1"/></svg>
<!-- notepad -->
<svg style="left:892px;top:737px" width="24" height="23" viewBox="0 0 24 23"><path d="M8.6 1L21 3.6L16.6 20L2 17z" fill="#cfe6f4" stroke="#7a9ab0" stroke-width="0.6"/><path d="M8.6 1L2 17L16.6 20L14 16z" fill="#a8cce4"/><path d="M21 3.6L22.6 5.4L18 21.4L16.6 20z" fill="#e8b84a"/><path d="M2 17L16.6 20L18 21.4L3 18.6z" fill="#8ab0c8"/></svg>
<!-- skype -->
<svg style="left:940px;top:737px" width="24" height="23" viewBox="0 0 24 23"><circle cx="7" cy="6.6" r="6" fill="#00aff0"/><circle cx="17" cy="16.4" r="6" fill="#00aff0"/><circle cx="12" cy="11.5" r="10" fill="#00aff0"/></svg>
<span class="t" style="left:946.8px;top:741.46px;font-size:16px;color:#fff;font-weight:bold;">S</span>
<!-- outlook -->
<svg style="left:988px;top:737px" width="23" height="22.5" viewBox="0 0 23 20" preserveAspectRatio="none"><rect x="11" y="4.4" width="11.4" height="11.2" fill="#fff" stroke="#0072c6" stroke-width="0.8"/><path d="M11.4 5L16.8 10L22 5" fill="none" stroke="#0072c6" stroke-width="1.3"/><path d="M0.6 2L13.6 0V20L0.6 18z" fill="#0072c6"/><ellipse cx="7" cy="10" rx="2.7" ry="3.5" fill="none" stroke="#fff" stroke-width="1.7"/></svg>
<!-- excel -->
<svg style="left:1036px;top:737px" width="23" height="22.5" viewBox="0 0 23 20" preserveAspectRatio="none"><rect x="10" y="1.6" width="12.4" height="16.8" fill="#fff" stroke="#217346" stroke-width="0.8"/><path d="M13.6 4.6H20.6M13.6 7.4H20.6M13.6 10.2H20.6M13.6 13H20.6M13.6 15.6H20.6" stroke="#217346" stroke-width="1.3"/><path d="M17 3V17" stroke="#fff" stroke-width="1"/><path d="M0.6 2L13.6 0V20L0.6 18z" fill="#217346"/><path d="M3.8 6.2L10.2 13.8M10.2 6.2L3.8 13.8" stroke="#fff" stroke-width="1.7"/></svg>
<!-- virtualbox -->
<svg style="left:1084px;top:736px" width="22" height="24" viewBox="0 0 22 24"><path d="M11 0.6L21.4 5.4V17L11 22.6L0.6 17V5.4z" fill="#f2f5fa"/><path d="M2.4 7.6L9.8 11.2V20L2.4 16z" fill="#18294a"/><path d="M19.6 7.6L12.2 11.2V20L19.6 16z" fill="#22406e"/><path d="M11 2.6L18 5.8L11 9.2L4 5.8z" fill="#2a4a7a"/><ellipse cx="11" cy="22.6" rx="4" ry="1.2" fill="#8a9ab8"/></svg>
<!-- eclipse active -->
<svg style="left:1132px;top:736px" width="25" height="24" viewBox="0 0 25 24"><circle cx="11.2" cy="12" r="11" fill="#f7941e"/><circle cx="13.6" cy="12" r="10.8" fill="url(#gEcl)"/><rect x="3.4" y="8.9" width="20.8" height="1.4" fill="#fff"/><rect x="3" y="11.1" width="21.4" height="1.4" fill="#fff"/><rect x="3.4" y="13.3" width="20.8" height="1.4" fill="#fff"/></svg>
<!-- tray -->
<svg style="left:1177px;top:744px" width="13" height="8" viewBox="0 0 13 8"><path d="M0.8 7.2L6.5 1.4L12.2 7.2" fill="none" stroke="#fff" stroke-width="1.4"/></svg>
<svg style="left:1198px;top:742px" width="18" height="12" viewBox="0 0 18 12"><rect x="4.6" y="2.6" width="11" height="7.6" fill="none" stroke="#fff" stroke-width="1.3"/><rect x="16" y="4.6" width="1.6" height="3.6" fill="#fff"/><rect x="6.4" y="4.4" width="7.4" height="4" fill="#fff"/><path d="M0.4 4.4H3.4M1.4 2V4.4M3 2V4.4M1.2 4.4Q1 6.6 2.6 7V10" fill="none" stroke="#fff" stroke-width="1"/></svg>
<svg style="left:1222px;top:741px" width="18" height="15" viewBox="0 0 18 15"><rect x="4.6" y="1" width="12.4" height="8.6" fill="none" stroke="#fff" stroke-width="1.3"/><path d="M10.8 9.6V12.6M7 13.2H15" stroke="#fff" stroke-width="1.3"/><rect x="0.8" y="4.6" width="4.6" height="8.6" fill="#0b0f16" stroke="#fff" stroke-width="1.2"/></svg>
<svg style="left:1246px;top:741px" width="16" height="14" viewBox="0 0 16 14"><path d="M0.8 4.6H3.4L7 1V13L3.4 9.4H0.8z" fill="none" stroke="#fff" stroke-width="1.2" stroke-linejoin="round"/><path d="M10 4.6L14.6 9.4M14.6 4.6L10 9.4" stroke="#fff" stroke-width="1.2"/></svg>
<svg style="left:1271px;top:741px" width="16" height="16" viewBox="0 0 16 16"><path d="M0.6 0.6H15.4V11.4H10L7.4 14.6V11.4H0.6z" fill="#fff"/><path d="M3.4 3.8H12.6M3.4 6H12.6M3.4 8.2H9.6" stroke="#0b0f16" stroke-width="1"/></svg>
<span class="t" style="left:1304.5px;top:730.84px;font-size:12px;letter-spacing:-0.315px;color:#fff;">8:31 PM</span>
<span class="t" style="left:1300px;top:747.84px;font-size:12px;letter-spacing:-0.155px;color:#fff;">5/10/2017</span>
</body>
</html>
